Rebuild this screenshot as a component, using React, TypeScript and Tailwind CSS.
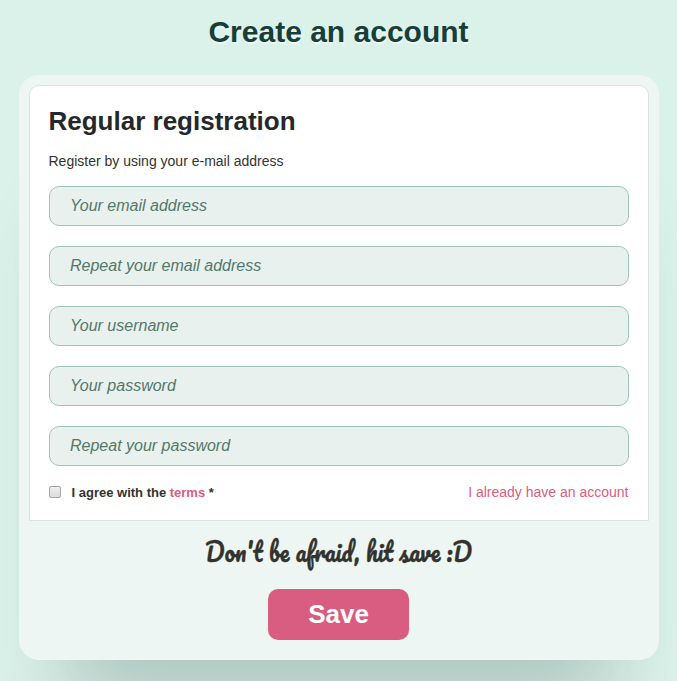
const fields = [
  { type: 'email', label: 'Your email address' },
  { type: 'email', label: 'Repeat your email address' },
  { type: 'text', label: 'Your username' },
  { type: 'password', label: 'Your password' },
  { type: 'password', label: 'Repeat your password' },
];

export default function App() {
  return (
    <main className="h-[681px] w-[677px] overflow-hidden bg-[#dbf2eb] pt-3 font-['Liberation_Sans',Arial,sans-serif] text-[#33332d]">
      <h1 className="h-[63px] text-center text-[30px] leading-10 font-bold text-[#173f38] [text-shadow:1px_2px_1px_#eef7f4]">
        Create an account
      </h1>
      <form
        className="ml-[19px] h-[585px] w-[640px] rounded-[20px] bg-[#edf6f3] p-[10px] shadow-[0_90px_80px_-50px_rgba(0,20,15,0.19),0_120px_60px_-20px_rgba(0,40,30,0.02)]"
        onSubmit={(e) => e.preventDefault()}
      >
        <section className="h-[436px] rounded-t-[10px] border border-[#dae3df] bg-white px-[19px] pt-[17px]">
          <h2 className="-ml-[0.5px] text-[26px] leading-9 font-bold text-[#25282a]">Regular registration</h2>
          <p className="mt-[12px] -ml-[0.5px] text-[14px] leading-5">Register by using your e-mail address</p>
          <div className="mt-[15px] flex flex-col gap-5">
            {fields.map((f) => (
              <input
                key={f.label}
                type={f.type}
                placeholder={f.label}
                className="block h-10 w-full rounded-[10px] border border-[#9dc6b8] bg-[#e8f1ee] px-5 text-[16px] italic placeholder:text-[#53786c] placeholder:opacity-100"
              />
            ))}
          </div>
          <div className="mt-4 flex h-5 items-center justify-between">
            <label className="flex items-center text-[13px] font-bold">
              <input
                type="checkbox"
                className="mr-[10.5px] size-3 appearance-none rounded-[2px] border border-[#a5a5a5] bg-linear-to-b from-[#eeeeee] to-[#dcdcdc]"
              />
              <span className="pt-px">
                I agree with the <a className="text-[#d95d80]">terms</a> *
              </span>
            </label>
            <a className="mr-[0.5px] text-[14px] text-[#d95d80]">I already have an account</a>
          </div>
        </section>
        <div className="mr-px flex flex-col items-center pt-3">
          <p className="h-9 scale-x-93 text-[25px] leading-9 font-normal whitespace-nowrap [-webkit-text-stroke:0.35px_#33332d] [font-family:Pacifico,cursive]">
            Don't be afraid, hit save :D
          </p>
          <button className="mt-5 h-[51px] w-[141px] rounded-[10px] bg-[#d95d80] text-[26px] font-bold text-white">
            Save
          </button>
        </div>
      </form>
    </main>
  );
}
